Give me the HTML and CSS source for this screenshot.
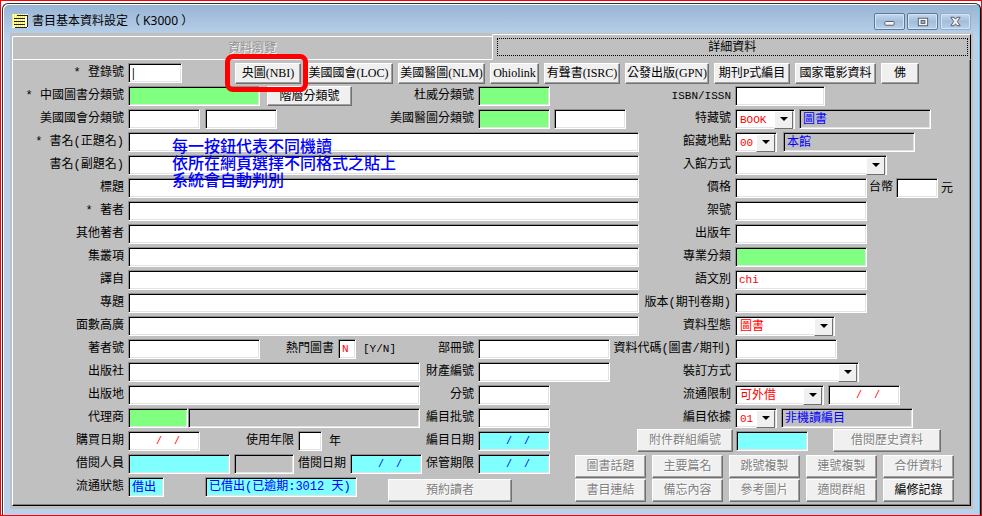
FILE: index.html
```html
<!DOCTYPE html>
<html lang="zh-Hant">
<head>
<meta charset="utf-8">
<title>書目基本資料設定</title>
<link rel="stylesheet" href="styles.css">
</head>
<body>
<div class="window">
  <header class="titlebar">
    <svg class="app-icon" viewBox="0 0 16 14" width="16" height="14" shape-rendering="crispEdges" aria-hidden="true">
      <path d="M0 0h16v14H0z" fill="#fff"/>
      <path d="M0.500 0v13M2.500 0v13M4.500 0v13M6.500 0v13M8.500 0v13M10.500 0v13M12.500 0v13" stroke="#ffee20" stroke-width="1"/>
      <path d="M5 1.500h10M2 4.500h11M2 7.500h11M2 10.500h11M3 13.500h12" stroke="#222"/>
      <path d="M15.500 1v12" stroke="#222"/>
    </svg>
    <h1>書目基本資料設定（ K3000 ）</h1>
    <div class="controls">
      <button type="button" aria-label="最小化"><svg viewBox="0 0 30 16" width="29" height="15"><rect x="10" y="8" width="10" height="4" rx="1" fill="#f4f4f4" stroke="#555a66"/></svg></button>
      <button type="button" aria-label="還原"><svg viewBox="0 0 30 16" width="29" height="15"><rect x="10.500" y="4.500" width="10" height="8" fill="#f4f4f4" stroke="#555a66"/><rect x="13.500" y="7" width="4" height="3" fill="#9ab4d4" stroke="#555a66"/></svg></button>
      <button type="button" aria-label="關閉" class="close"><svg viewBox="0 0 30 16" width="29" height="15"><path d="M10 3.500h3.500l1.500 2 1.500-2H20L17 8l3 4.500h-3.500l-1.500-2-1.500 2H10L13 8z" fill="#eee" stroke="#555a66"/></svg></button>
    </div>
  </header>
  <main class="client">
    <div class="tabs">
      <button type="button" class="tab tab-off" disabled>資料瀏覽</button>
      <button type="button" class="tab tab-on"><span>詳細資料</span></button>
    </div>
    <form class="panel">
      <div class="row toolbar">
        <label class="name" for="reg">* 登錄號</label>
        <input id="reg" class="w54" value="|">
        <div class="tools">
          <span class="marked"><button type="button" class="w66">央圖(NBI)</button></span>
          <button type="button" class="w89">美國國會(LOC)</button>
          <button type="button" class="w87">美國醫圖(NLM)</button>
          <button type="button" class="w49">Ohiolink</button>
          <button type="button" class="w76">有聲書(ISRC)</button>
          <button type="button" class="w84">公發出版(GPN)</button>
          <button type="button" class="w76">期刊P式編目</button>
          <button type="button" class="w81">國家電影資料</button>
          <button type="button" class="w38">佛</button>
        </div>
      </div>
      <div class="columns">
        <section class="left">
          <p class="note">每一按鈕代表不同機讀<br>依所在網頁選擇不同格式之貼上<br>系統會自動判別</p>
          <div class="row">
            <label class="name" for="ccl">* 中國圖書分類號</label><input id="ccl" class="w132 green">
            <button type="button" class="level">階層分類號</button>
            <label class="mid" for="ddc">杜威分類號</label><div class="end"><input id="ddc" class="w72 green"></div>
          </div>
          <div class="row">
            <label class="name" for="lcc">美國國會分類號</label><input id="lcc" class="w72"><input class="w72 gap-m" aria-label="美國國會分類號 2">
            <label class="mid" for="nlm">美國醫圖分類號</label><div class="end"><input id="nlm" class="w72 green"><input class="w72" aria-label="美國醫圖分類號 2"></div>
          </div>
          <div class="row"><label class="name" for="t1">* 書名(正題名)</label><input id="t1" class="fill"></div>
          <div class="row"><label class="name" for="t2">書名(副題名)</label><input id="t2" class="fill"></div>
          <div class="row"><label class="name" for="t3">標題</label><input id="t3" class="fill"></div>
          <div class="row"><label class="name" for="t4">* 著者</label><input id="t4" class="fill"></div>
          <div class="row"><label class="name" for="t5">其他著者</label><input id="t5" class="fill"></div>
          <div class="row"><label class="name" for="t6">集叢項</label><input id="t6" class="fill"></div>
          <div class="row"><label class="name" for="t7">譯自</label><input id="t7" class="fill"></div>
          <div class="row"><label class="name" for="t8">專題</label><input id="t8" class="fill"></div>
          <div class="row"><label class="name" for="t9">面數高廣</label><input id="t9" class="fill"></div>
          <div class="row">
            <label class="name" for="au">著者號</label><input id="au" class="w132">
            <label class="gap-xl" for="hot">熱門圖書</label><input id="hot" class="w18 red" value="N"><span class="latin gap-s">[Y/N]</span>
            <label class="mid" for="vol">部冊號</label><div class="end"><input id="vol" class="w132"></div>
          </div>
          <div class="row">
            <label class="name" for="pub">出版社</label><input id="pub" class="fill">
            <label class="mid fixed" for="prop">財產編號</label><div class="end"><input id="prop" class="w132"></div>
          </div>
          <div class="row">
            <label class="name" for="place">出版地</label><input id="place" class="fill">
            <label class="mid fixed" for="sub">分號</label><div class="end"><input id="sub" class="w72"></div>
          </div>
          <div class="row">
            <label class="name" for="agent">代理商</label><input id="agent" class="w60 green"><input class="fill gray flush" aria-label="代理商名稱" readonly>
            <label class="mid fixed" for="batch">編目批號</label><div class="end"><input id="batch" class="w72"></div>
          </div>
          <div class="row">
            <label class="name" for="buy">購買日期</label><input id="buy" class="w72 red" value="    /  /">
            <label class="gap-2xl" for="years">使用年限</label><input id="years" class="w24"><span class="gap-s">年</span>
            <label class="mid" for="cdate">編目日期</label><div class="end"><input id="cdate" class="w72 cyan" value="    /  /"></div>
          </div>
          <div class="row">
            <label class="name" for="reader">借閱人員</label><input id="reader" class="w102 cyan"><input class="w60 gray" aria-label="借閱人員姓名" readonly>
            <label for="ldate">借閱日期</label><input id="ldate" class="w72 cyan" value="    /  /">
            <label class="mid" for="keep">保管期限</label><div class="end"><input id="keep" class="w72 cyan" value="    /  /"></div>
          </div>
          <div class="row last">
            <label class="name" for="state">流通狀態</label><input id="state" class="w36 cyan" value="借出">
            <input id="loan" class="w152 cyan" aria-label="借閱狀況" value="已借出(已逾期:3012 天)">
            <button type="button" class="big w124 reserve" disabled>預約讀者</button>
          </div>
        </section>
        <section class="right">
          <div class="row"><label class="name latin" for="isbn">ISBN/ISSN</label><input id="isbn" class="w90"></div>
          <div class="row"><label class="name" for="coll">特藏號</label><span class="combo w60"><select id="coll" class="latin"><option>BOOK</option></select></span><input class="w132 gray" aria-label="特藏名稱" value="圖書" readonly></div>
          <div class="row"><label class="name" for="loc">館藏地點</label><span class="combo w42"><select id="loc" class="latin"><option>00</option></select></span><input class="w132 gray gap-xs" aria-label="館藏地點名稱" value="本館" readonly></div>
          <div class="row"><label class="name" for="acq">入館方式</label><span class="combo w152"><select id="acq"><option></option></select></span></div>
          <div class="row"><label class="name" for="price">價格</label><input id="price" class="w132"><span class="unit"><label for="ntd">台幣</label><input id="ntd" class="w42"><span>元</span></span></div>
          <div class="row"><label class="name" for="shelf">架號</label><input id="shelf" class="w132"></div>
          <div class="row"><label class="name" for="year">出版年</label><input id="year" class="w132"></div>
          <div class="row"><label class="name" for="spec">專業分類</label><input id="spec" class="w132 green"></div>
          <div class="row"><label class="name" for="lang">語文別</label><input id="lang" class="w132 red latin" value="chi"></div>
          <div class="row"><label class="name" for="ed">版本(期刊卷期)</label><input id="ed" class="w132"></div>
          <div class="row"><label class="name" for="type">資料型態</label><span class="combo w100"><select id="type"><option>圖書</option></select></span></div>
          <div class="row"><label class="name" for="code">資料代碼(圖書/期刊)</label><input id="code" class="w102"></div>
          <div class="row"><label class="name" for="bind">裝訂方式</label><span class="combo w124"><select id="bind"><option></option></select></span></div>
          <div class="row"><label class="name" for="limit">流通限制</label><span class="combo w89"><select id="limit"><option>可外借</option></select></span><input class="w72 red" aria-label="限制日期" value="    /  /"></div>
          <div class="row"><label class="name" for="basis">編目依據</label><span class="combo w42"><select id="basis" class="latin"><option>01</option></select></span><input class="w132 gray" aria-label="編目依據名稱" value="非機讀編目" readonly></div>
          <div class="actions">
            <div class="attach">
              <button type="button" class="big w96" disabled>附件群組編號</button>
              <input class="w72 cyan" aria-label="附件群組編號">
              <button type="button" class="big w108 history" disabled>借閱歷史資料</button>
            </div>
            <div class="grid">
              <button type="button" class="big" disabled>圖書話題</button>
              <button type="button" class="big" disabled>主要篇名</button>
              <button type="button" class="big" disabled>跳號複製</button>
              <button type="button" class="big" disabled>連號複製</button>
              <button type="button" class="big" disabled>合併資料</button>
              <button type="button" class="big" disabled>書目連結</button>
              <button type="button" class="big" disabled>備忘內容</button>
              <button type="button" class="big" disabled>參考圖片</button>
              <button type="button" class="big" disabled>適閱群組</button>
              <button type="button" class="big">編修記錄</button>
            </div>
          </div>
        </section>
      </div>
    </form>
  </main>
</div>
</body>
</html>
```
FILE: styles.css
```css
* { box-sizing: border-box; }

body {
  margin: 0;
  border: 1px solid #f00;
  padding: 2px 0 0 1px;
  min-height: 100vh;
  background: #fff;
  color: #000;
  font: 12px/20px "Liberation Serif", "Noto Sans CJK TC", serif;
}

input, select, button { font: inherit; color: inherit; margin: 0; }

.window {
  border: 1px solid #333;
  border-right-color: #000;
  border-bottom: 0;
  border-radius: 6px 6px 0 0;
  box-shadow: inset -1px 0 #4fd0ec, inset 1px 1px #fff;
  background: linear-gradient(#98b4d4, #b9d1ea 32px);
  padding: 1px 7px 6px;
}

.titlebar { display: flex; align-items: center; height: 28px; padding: 4px 2px 0 2px; }
.titlebar h1 {
  flex: 1;
  margin: 0 0 0 4px;
  font: 12px/20px "Noto Sans", "Noto Sans CJK TC", sans-serif;
}
.controls { display: flex; gap: 2px; }
.controls button {
  display: grid;
  place-items: center;
  width: 31px;
  height: 17px;
  padding: 0;
  border: 1px solid #5d7896;
  border-radius: 2px;
  background: linear-gradient(#c3d8ed, #a3bedb 50%, #b7d0ea);
  box-shadow: inset 0 0 0 1px #d5e5f4;
}
.controls .close { border-color: #92acc8; }

.client { background: #c0c0c0; padding: 1px 2px 3px; }

.tabs { display: grid; grid-template-columns: repeat(2, minmax(0, 1fr)); align-items: end; }
.tab {
  height: 24px;
  padding: 0;
  border: 1px solid #fff;
  border-width: 1px 0 1px 1px;
  border-radius: 2px 0 0 0;
  background: #c0c0c0;
  line-height: 20px;
}
.tab-on { height: 26px; border-bottom-color: #c0c0c0; border-right: 1px solid #000; padding: 3px 2px 3px 4px; }
.tab-on span { display: block; border: 1px dotted #000; height: 18px; line-height: 16px; }
.tab-off { color: #909090; text-shadow: 1px 1px #fff; }

.panel {
  border: 1px solid #fff;
  border-width: 0 1px 1px 1px;
  border-right-color: #000;
  border-bottom-color: #000;
  box-shadow: inset -1px -1px #808080;
  padding: 3px 0 3px;
}

.row { display: flex; align-items: center; gap: 4px; height: 20px; margin-bottom: 3px; white-space: nowrap; }
.row > * { flex: none; }
.row label, #loan { font-family: "Liberation Mono", "Noto Sans CJK TC", monospace; }
.name { display: flex; justify-content: flex-end; width: 111px; white-space: pre; }
.row .latin { font: 11px/20px "Liberation Mono", "Noto Sans CJK TC", monospace; }

input, .combo {
  height: 20px;
  border: 1px solid #fff;
  border-top-color: #909090;
  border-left-color: #909090;
  border-radius: 0;
  background: #fff;
  box-shadow: inset 1px 1px #000, inset -1px -1px #e3e3e3;
  padding: 0 0 0 3px;
  color: #00f;
  outline: 0;
}
.row > .fill { flex: 1 1 0; min-width: 0; }
input.green { background: #80ff80; }
input.cyan { background: #80ffff; }
input.gray { background: #c0c0c0; }
input.red { color: #f00; }
input[value*="/"] { font: 10px "Liberation Mono", monospace; white-space: pre; }
#hot { font: 11px "Liberation Mono", monospace; }
#reg { color: #000; font-weight: bold; }

.combo { display: flex; position: relative; color: #f00; }
.combo select {
  flex: 1;
  min-width: 0;
  height: 18px;
  border: 0;
  padding: 0 17px 0 1px;
  background: none;
  appearance: none;
  line-height: 18px;
  outline: 0;
}
.combo::before, .combo::after { content: ""; position: absolute; pointer-events: none; }
.combo::before {
  top: 1px;
  right: 1px;
  width: 17px;
  height: 16px;
  background: #f0f0f0;
  border: 1px solid #fff;
  border-right-color: #707070;
  border-bottom-color: #707070;
}
.combo::after {
  top: 7px;
  right: 6px;
  border: 4px solid transparent;
  border-top-color: #000;
  border-bottom: 0;
}

.panel button {
  height: 20px;
  padding: 0;
  border: 1px solid #fff;
  border-right-color: #707070;
  border-bottom-color: #707070;
  border-radius: 0;
  background: #f0f0f0;
  box-shadow: inset -1px -1px #a0a0a0;
  line-height: 16px;
  white-space: nowrap;
}
.panel .tools button { height: 21px; }
.panel .big { height: 23px; line-height: 19px; }
.panel button:disabled { color: #808080; text-shadow: 1px 1px #fff; }

.tools { display: flex; gap: 5px; margin-left: 49px; }
.tools > :nth-child(2) { margin-left: -2px; }
.marked { position: relative; }
.marked::after {
  content: "";
  position: absolute;
  inset: -9px -7px -8px -10px;
  border: 5px solid #f00;
  border-radius: 8px;
  pointer-events: none;
  z-index: 2;
}

.columns { display: flex; }
.left { position: relative; flex: 1; min-width: 0; }
.right { flex: none; width: 331px; }
.right .name { width: 92px; }
.mid { margin-left: auto; text-align: right; }
.row > .fixed { width: 50px; margin-left: 0; }
.row > .flush { margin-left: -4px; }
.end { display: flex; gap: 4px; width: 161px; }
.panel .level { width: 85px; margin-left: 3px; }
.note {
  position: absolute;
  top: 51px;
  left: 159px;
  margin: 0;
  color: #00f;
  font: 500 16px/17px "Noto Sans CJK TC", sans-serif;
  pointer-events: none;
  z-index: 1;
}
.last { align-items: flex-start; }
.panel .reserve { margin: 2px 0 0 27px; }
.unit { display: flex; gap: 3px; margin-left: -2px; }

.actions { margin-top: -2px; display: grid; gap: 3px; justify-content: end; padding-right: 16px; }
.attach { display: flex; align-items: center; gap: 3px; justify-content: flex-end; padding-right: 13px; }
.attach .history { margin-left: 22px; }
.grid { display: grid; grid-template-columns: repeat(5, 71px); gap: 1px 6px; }

.gap-xs { margin-left: 2px; }
.gap-s { margin-left: 3px; }
.gap-m { margin-left: 1px; }
.gap-xl { margin-left: 22px; }
.gap-2xl { margin-left: 42px; }
#loan { margin-left: 37px; }

.w18 { width: 18px; }
.w24 { width: 24px; }
.w36 { width: 36px; }
.w38 { width: 38px; }
.w42 { width: 42px; }
.w49 { width: 49px; }
.w54 { width: 54px; }
.w60 { width: 60px; }
.w66 { width: 66px; }
.w72 { width: 72px; }
.w76 { width: 76px; }
.w81 { width: 81px; }
.w84 { width: 84px; }
.w87 { width: 87px; }
.w89 { width: 89px; }
.w90 { width: 90px; }
.w96 { width: 96px; }
.w100 { width: 100px; }
.w102 { width: 102px; }
.w108 { width: 108px; }
.w124 { width: 124px; }
.w132 { width: 132px; }
.w152 { width: 152px; }
```
